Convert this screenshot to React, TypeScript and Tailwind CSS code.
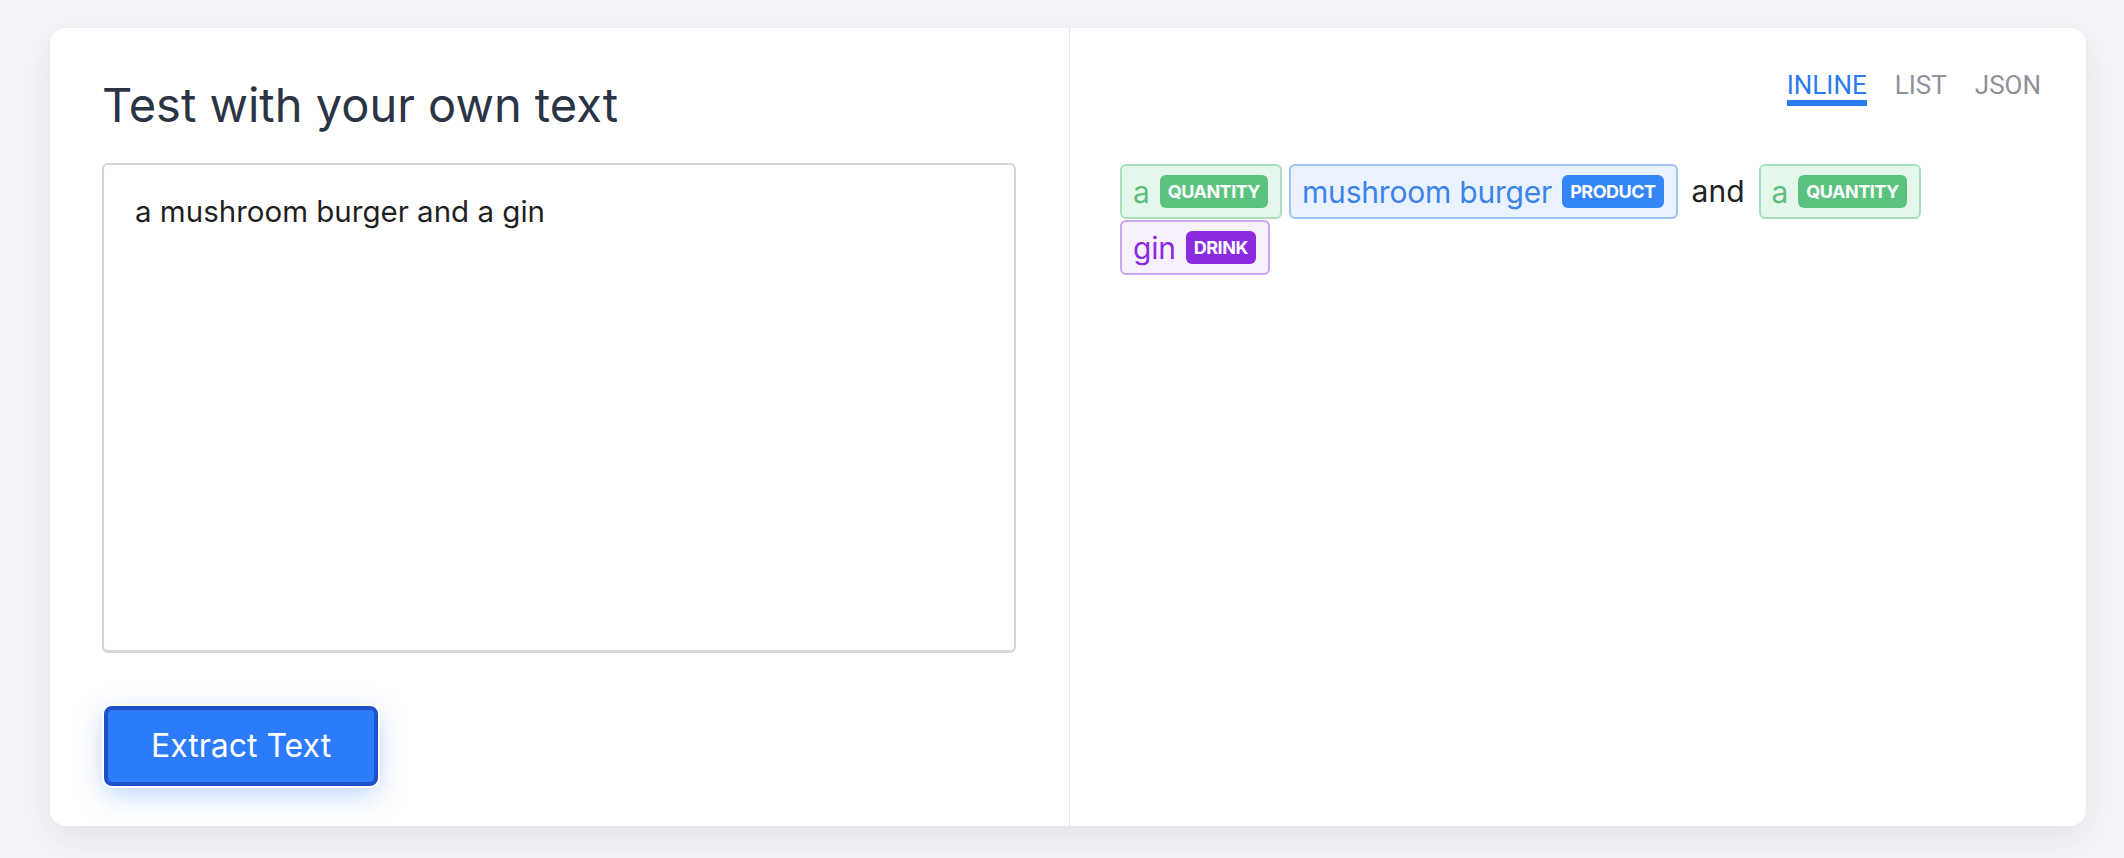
import React from 'react';

type Ent = { text: string; label?: string; kind?: 'qty' | 'product' | 'drink' };

const tokens: Ent[] = [
	{ text: 'a', label: 'quantity', kind: 'qty' },
	{ text: 'mushroom burger', label: 'product', kind: 'product' },
	{ text: 'and' },
	{ text: 'a', label: 'quantity', kind: 'qty' },
	{ text: 'gin', label: 'drink', kind: 'drink' },
];

const chipCls = {
	qty: 'bg-[#e5f6ea] border-[#a9dfbd] text-[#5cbf7e]',
	product: 'bg-[#e9f2fe] border-[#9cc3f3] text-[#3a83e8]',
	drink: 'bg-[#f7f1fe] border-[#c9a6ee] text-[#8a2be0]',
};

const badgeCls = {
	qty: 'bg-[#5cc27f]',
	product: 'bg-[#3385f8]',
	drink: 'bg-[#8a2be2]',
};

function Chip({ t }: { t: Ent }) {
	if (!t.kind) {
		return <span className="h-[55px] flex items-center px-[7px] mr-[7px] text-[30px] text-[#222]">{t.text}</span>;
	}
	return (
		<span className={`h-[55px] mr-[7px] inline-flex items-center gap-[10px] pl-[11px] pr-[12px] border-2 rounded-md text-[30px] tracking-[-0.2px] ${chipCls[t.kind]}`}>
			<span className="leading-none">{t.text}</span>
			<span className={`h-[33px] px-[8px] rounded-md flex items-center text-white text-[18px] font-bold uppercase leading-none tracking-[-0.5px] ${badgeCls[t.kind]}`}>
				{t.label}
			</span>
		</span>
	);
}

export default function App() {
	return (
		<div className="min-h-[858px] bg-[#f3f4f8] pt-[28px] pl-[50px]" style={{ fontFamily: 'Inter, "Noto Sans", sans-serif' }}>
			<div className="w-[2036px] h-[798px] bg-white rounded-2xl shadow-[0_12px_32px_rgba(30,40,70,0.08)] flex">
				{/* left: input */}
				<div className="w-[1019px] pl-[52px] pr-[53px] pt-[53px]">
					<h1 className="text-[47px] leading-none text-[#2a3444]">Test with your own text</h1>
					<textarea
						className="mt-[35px] w-[914px] h-[490px] block resize-none border-2 border-[#d6d6d6] border-b-[3px] rounded-md pl-[31px] pt-[24px] text-[29.5px] leading-normal text-[#1f1f1f] outline-none"
						defaultValue="a mushroom burger and a gin"
					/>
					<button className="mt-[53px] ml-[2px] w-[274px] h-[80px] rounded-lg border-4 border-[#1e50c8] bg-[#2b7bfa] text-white text-[32px] shadow-[0_0_0_2px_#ffffff,0_8px_26px_rgba(59,130,246,0.35)]">
						Extract Text
					</button>
				</div>
				{/* right: results */}
				<div className="flex-1 border-l border-[#e6e6e6] pl-[50px] pr-[45px]">
					<div className="flex justify-end gap-[28px] pt-[44px] text-[26px] leading-none" style={{ fontFamily: 'Roboto, sans-serif' }}>
						<div className="flex flex-col items-stretch">
							<span className="text-[#2b7bf0]">INLINE</span>
							<span className="mt-[2px] h-[6px] bg-[#2b7bf0]" />
						</div>
						<span className="text-[#8e9199]">LIST</span>
						<span className="text-[#8e9199]">JSON</span>
					</div>
					<div className="mt-[58px] flex flex-wrap gap-y-[1px]">
						{tokens.map((t, i) => (
							<Chip key={i} t={t} />
						))}
					</div>
				</div>
			</div>
		</div>
	);
}
